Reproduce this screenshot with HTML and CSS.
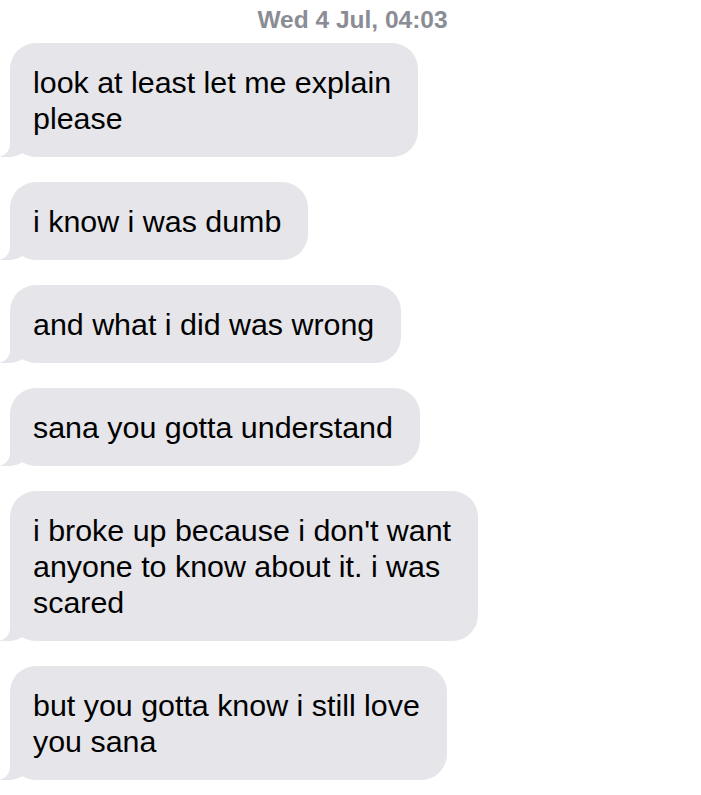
FILE: index.html
```html
<!DOCTYPE html>
<html>
<head>
<meta charset="utf-8">
<link rel="stylesheet" href="styles.css">
</head>
<body>
<div class="thread">
  <div class="stamp">Wed 4 Jul, 04:03</div>
  <div class="bubble">look at least let me explain<br>please</div>
  <div class="bubble">i know i was dumb</div>
  <div class="bubble">and what i did was wrong</div>
  <div class="bubble">sana you gotta understand</div>
  <div class="bubble">i broke up because i don't want<br>anyone to know about it. i was<br>scared</div>
  <div class="bubble">but you gotta know i still love<br>you sana</div>
</div>
</body>
</html>
```
FILE: styles.css
```css
html, body {
  margin: 0;
  padding: 0;
  background: #ffffff;
}
.thread {
  display: flex;
  flex-direction: column;
  align-items: flex-start;
  gap: 25px;
  padding: 6px 0 0 10px;
  font-family: "Liberation Sans", Arial, sans-serif;
}
.stamp {
  align-self: stretch;
  margin-left: -6px;
  text-align: center;
  font-size: 24.5px;
  line-height: 28px;
  font-weight: bold;
  color: #8a8d95;
  margin-bottom: -16px;
}
.bubble {
  position: relative;
  background: #e5e5ea;
  color: #000;
  font-size: 30.4px;
  line-height: 36px;
  padding: 21px 27px 21px 23px;
  border-radius: 26px;
  white-space: nowrap;
}
.bubble::before {
  content: "";
  position: absolute;
  bottom: 0;
  left: -10px;
  width: 30px;
  height: 26px;
  background: #e5e5ea;
  border-bottom-right-radius: 22px 16px;
}
.bubble::after {
  content: "";
  position: absolute;
  bottom: 0;
  left: -30px;
  width: 30px;
  height: 26px;
  background: #ffffff;
  border-bottom-right-radius: 13px;
}
```
